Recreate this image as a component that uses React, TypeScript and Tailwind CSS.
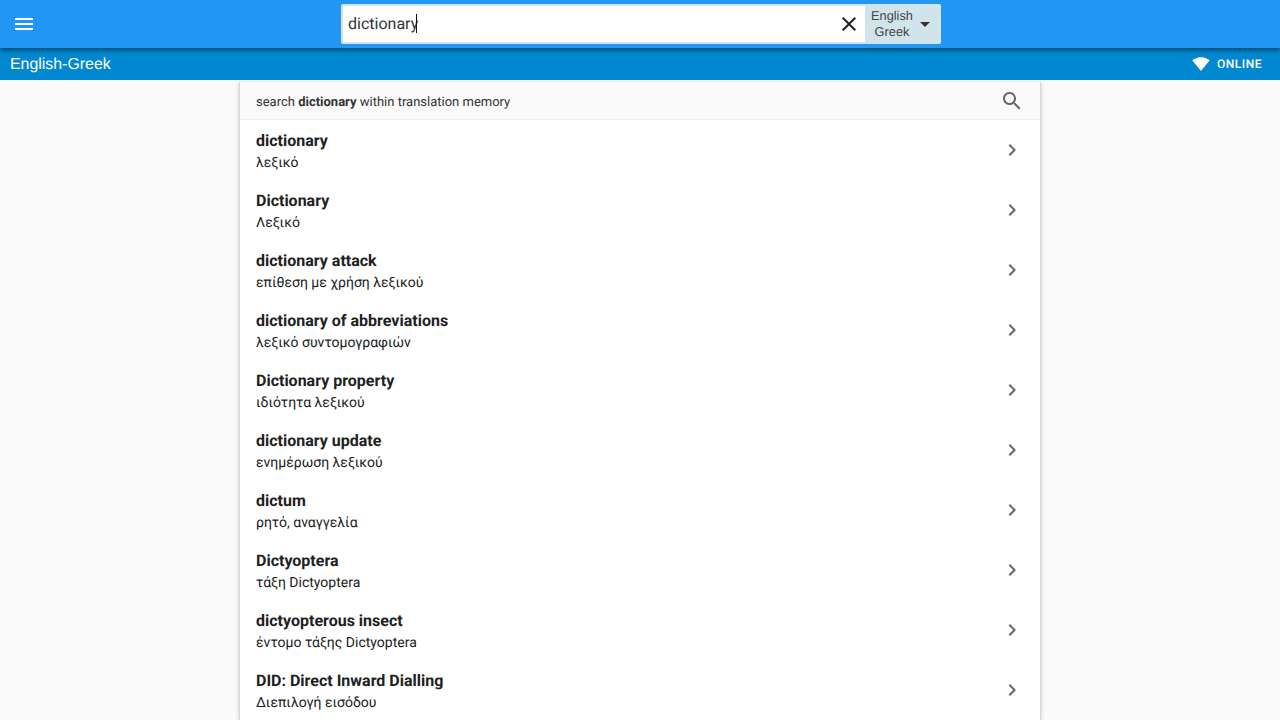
const rows = [
  ["dictionary", "λεξικό"],
  ["Dictionary", "Λεξικό"],
  ["dictionary attack", "επίθεση με χρήση λεξικού"],
  ["dictionary of abbreviations", "λεξικό συντομογραφιών"],
  ["Dictionary property", "ιδιότητα λεξικού"],
  ["dictionary update", "ενημέρωση λεξικού"],
  ["dictum", "ρητό, αναγγελία"],
  ["Dictyoptera", "τάξη Dictyoptera"],
  ["dictyopterous insect", "έντομο τάξης Dictyoptera"],
  ["DID: Direct Inward Dialling", "Διεπιλογή εισόδου"],
];

function Icon({ d, className }: { d: string; className: string }) {
  return (
    <svg viewBox="0 0 24 24" className={className} fill="currentColor">
      <path d={d} />
    </svg>
  );
}

export default function App() {
  return (
    <div className="h-[720px] overflow-hidden bg-[#fafafa] font-['Roboto',sans-serif] text-[#212121] [text-rendering:geometricPrecision]">
      {/* top bar */}
      <div className="relative z-20 flex h-12 items-center bg-[#2196f3] shadow-[0_2px_5px_rgba(0,0,0,0.5)]">
        <div className="flex w-[341px] pl-3">
          <Icon className="h-6 w-6 text-white" d="M3 18h18v-2H3v2zm0-5h18v-2H3v2zm0-7v2h18V6H3z" />
        </div>
        <div className="flex h-10 w-[600px] overflow-hidden rounded-[2px] bg-[#d1e4ec]">
          <div className="my-[2px] ml-[2px] flex flex-1 items-center bg-white pl-[5px] pr-1">
            <span className="flex-1 text-base text-[#333]">
              dictionary<span className="-ml-[2px] border-l border-[#111]"></span>
            </span>
            <Icon className="h-6 w-6 text-[#212121]" d="M19 6.41L17.59 5 12 10.59 6.41 5 5 6.41 10.59 12 5 17.59 6.41 19 12 13.41 17.59 19 19 17.59 13.41 12z" />
          </div>
          <div className="flex w-[76px] items-center pl-[6px]">
            <div className="w-[42px] text-center font-['Liberation_Sans',sans-serif] text-[12.8px] leading-4 text-[#444]">
              English
              <br />
              Greek
            </div>
            <Icon className="h-6 w-6 text-[#333]" d="M7 10l5 5 5-5z" />
          </div>
        </div>
      </div>

      {/* language bar */}
      <div className="flex h-8 items-center justify-between bg-[#0288d1] pl-[10px] pr-[18px] text-white">
        <span className="pt-[2px] font-['Liberation_Sans',sans-serif] text-[15.9px]">English-Greek</span>
        <div className="flex items-center gap-[7px]">
          <Icon className="h-[18px] w-[18px]" d="M12.01 21.49L23.64 7c-.45-.34-4.93-4-11.64-4C5.28 3 .81 6.66.36 7l11.63 14.49.01.01.01-.01z" />
          <span className="text-xs font-medium tracking-[0.5px]">ONLINE</span>
        </div>
      </div>

      {/* results */}
      <div className="mx-auto mt-[2px] w-[802px] border-x border-[#d8d8d8] bg-white shadow-[0_1px_4px_rgba(0,0,0,0.2)]">
        <div className="flex h-[38px] items-center justify-between border-b border-[#eeeeee] bg-[#fafafa] pl-4 pr-4">
          <span className="pt-[4px] text-[13px] text-[#333]">
            search <b className="font-bold">dictionary</b> within translation memory
          </span>
          <Icon className="h-6 w-6 text-[#666]" d="M15.5 14h-.79l-.28-.27C15.41 12.59 16 11.11 16 9.5 16 5.91 13.09 3 9.5 3S3 5.91 3 9.5 5.91 16 9.5 16c1.61 0 3.09-.59 4.23-1.57l.27.28v.79l5 4.99L20.49 19l-4.99-5zm-6 0C7.01 14 5 11.99 5 9.5S7.01 5 9.5 5 14 7.01 14 9.5 11.99 14 9.5 14z" />
        </div>
        {rows.map(([term, translation]) => (
          <div key={term} className="flex h-[60px] items-center justify-between pl-4 pr-4">
            <div className="pt-[3px]">
              <div className="text-base leading-[22px] font-bold">{term}</div>
              <div className="mt-[1px] text-sm leading-5">{translation}</div>
            </div>
            <Icon className="h-6 w-6 text-[#666]" d="M10 6L8.59 7.41 13.17 12l-4.58 4.59L10 18l6-6z" />
          </div>
        ))}
      </div>
    </div>
  );
}
